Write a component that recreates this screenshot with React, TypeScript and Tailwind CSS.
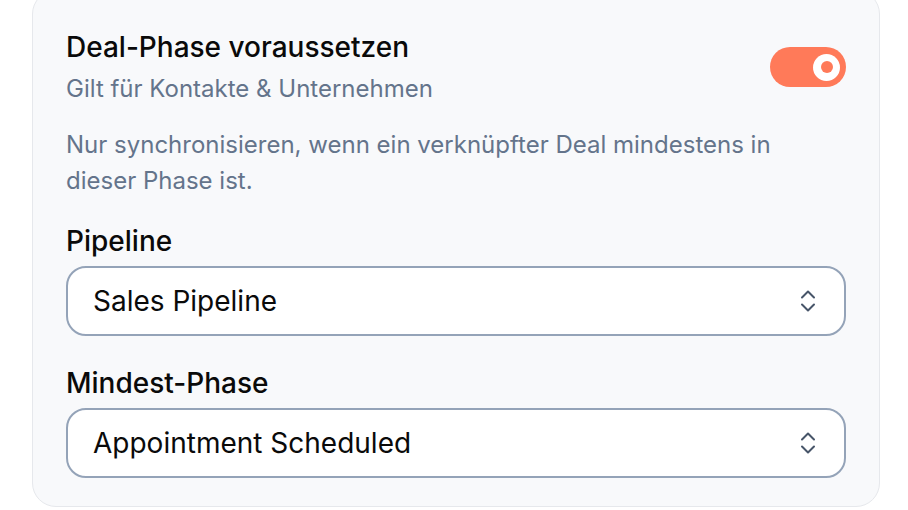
import React from "react";

function Chevrons() {
  return (
    <svg width="16" height="24" viewBox="0 0 16 24" fill="none" stroke="#475569" strokeWidth="2" strokeLinecap="round" strokeLinejoin="round">
      <polyline points="2,8.5 8,2.5 14,8.5" />
      <polyline points="2,15.5 8,21.5 14,15.5" />
    </svg>
  );
}

function Select({ value }: { value: string }) {
  return (
    <div className="flex h-[70px] items-center justify-between rounded-[20px] border-2 border-[#94a3b8] bg-white pl-[25px] pr-[28px]">
      <span className="text-[28px] leading-[34px] text-[#0a0a0a]">{value}</span>
      <Chevrons />
    </div>
  );
}

export default function App() {
  return (
    <div
      className="h-[510px] w-[908px] overflow-hidden bg-white pl-[32px]"
      style={{ fontFamily: "Inter, 'Noto Sans', sans-serif" }}
    >
      <div className="mt-[-10px] w-[848px] rounded-[24px] border border-[#e6e8ec] bg-[#f8f9fb] px-[33px] pt-[38px] pb-[28px]">
        <div className="flex items-center justify-between">
          <div>
            <div className="text-[28px] font-medium leading-[36px] text-[#0a0a0a]">Deal-Phase voraussetzen</div>
            <div className="mt-[8px] text-[24px] leading-[32px] text-[#64748b]">Gilt für Kontakte &amp; Unternehmen</div>
          </div>
          <div className="flex h-[40px] w-[76px] items-center justify-end rounded-full bg-[#ff7a59] pr-[6px]">
            <div className="flex h-[27px] w-[27px] items-center justify-center rounded-full bg-white">
              <div className="h-[12px] w-[12px] rounded-full bg-[#ff7a59]" />
            </div>
          </div>
        </div>
        <p className="mt-[22px] text-[24px] leading-[36px] text-[#64748b]">
          Nur synchronisieren, wenn ein verknüpfter Deal mindestens in
          <br />
          dieser Phase ist.
        </p>
        <div className="mt-[25px] text-[28px] font-medium leading-[34px] text-[#0a0a0a]">Pipeline</div>
        <div className="mt-[8px]">
          <Select value="Sales Pipeline" />
        </div>
        <div className="mt-[30px] text-[28px] font-medium leading-[34px] text-[#0a0a0a]">Mindest-Phase</div>
        <div className="mt-[8px]">
          <Select value="Appointment Scheduled" />
        </div>
      </div>
    </div>
  );
}
